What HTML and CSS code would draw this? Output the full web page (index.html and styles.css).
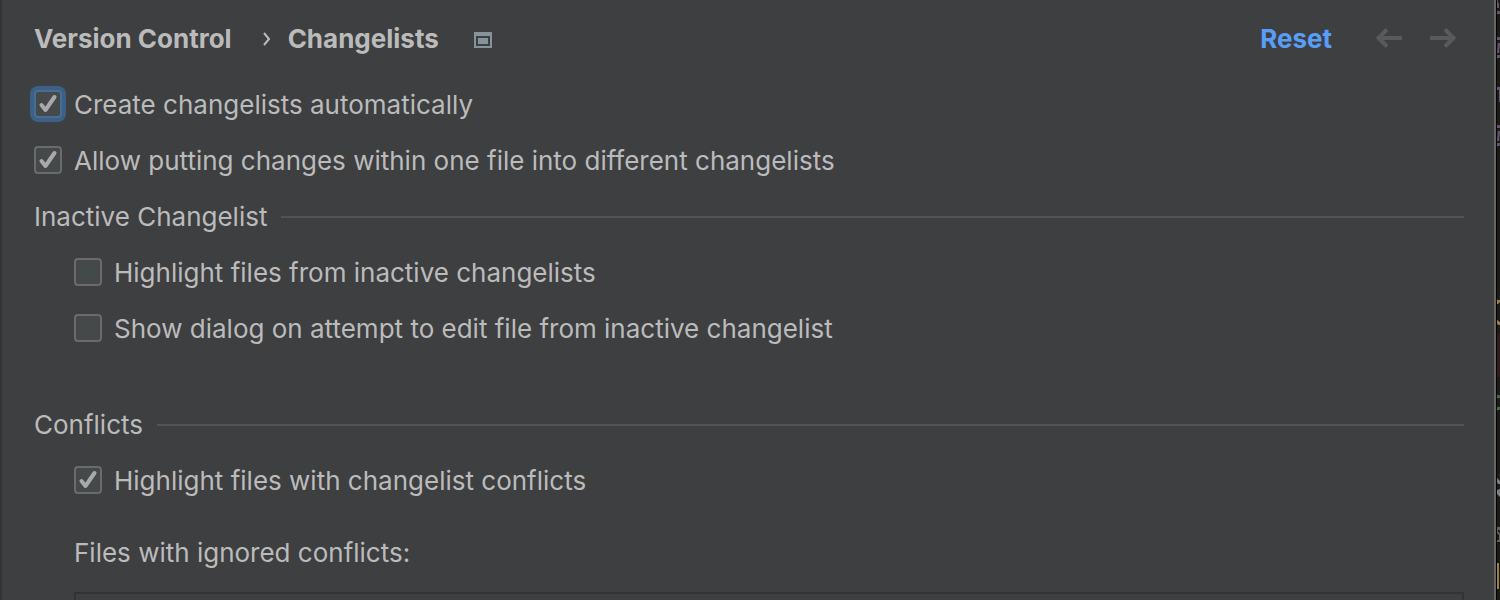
FILE: index.html
```html
<!DOCTYPE html>
<html lang="en">
<head>
    <meta charset="UTF-8">
    <meta name="viewport" content="width=device-width, initial-scale=1.0">
    <title>Changelists</title>
    <link rel="stylesheet" href="styles.css">
</head>
<body>
    <main class="settings">
        <header class="header">
            <nav class="breadcrumb">
                <a href="#version-control">Version Control</a>
                <svg class="chevron" width="8" height="16" viewBox="0 0 8 16"><path d="M1 2l5 6-5 6" fill="none" stroke="#bbbbbb" stroke-width="2"/></svg>
                <a href="#changelists">Changelists</a>
                <svg class="project-icon" width="18" height="16" viewBox="0 0 18 16">
                    <path d="M0 0h18v16H0zM2 4v10h14V4z" fill="#87939a" fill-rule="evenodd"/>
                    <path d="M4 6h10v6H4z" fill="#87939a"/>
                </svg>
            </nav>
            <button type="button" class="reset">Reset</button>
            <button type="button" class="nav-button" aria-label="Back" disabled>
                <svg width="26" height="20" viewBox="0 0 26 20"><path d="M26 10H3M11 1.500l-8.500 8.500 8.500 8.500" fill="none" stroke="currentColor" stroke-width="4"/></svg>
            </button>
            <button type="button" class="nav-button" aria-label="Forward" disabled>
                <svg width="26" height="20" viewBox="0 0 26 20"><path d="M0 10h23M15 1.500l8.500 8.500-8.500 8.500" fill="none" stroke="currentColor" stroke-width="4"/></svg>
            </button>
        </header>

        <div class="options">
            <label class="option">
                <span class="check">
                    <input type="checkbox" class="focused" checked>
                    <svg class="mark" width="28" height="28" viewBox="0 0 28 28"><path d="M7.500 15l4 5 9-13"/></svg>
                </span>
                Create changelists automatically
            </label>
            <label class="option">
                <span class="check">
                    <input type="checkbox" checked>
                    <svg class="mark" width="28" height="28" viewBox="0 0 28 28"><path d="M7.500 15l4 5 9-13"/></svg>
                </span>
                Allow putting changes within one file into different changelists
            </label>
        </div>

        <section class="group">
            <h2 class="group-title">Inactive Changelist</h2>
            <div class="options indented">
                <label class="option">
                    <span class="check">
                        <input type="checkbox">
                        <svg class="mark" width="28" height="28" viewBox="0 0 28 28"><path d="M7.500 15l4 5 9-13"/></svg>
                    </span>
                    Highlight files from inactive changelists
                </label>
                <label class="option">
                    <span class="check">
                        <input type="checkbox">
                        <svg class="mark" width="28" height="28" viewBox="0 0 28 28"><path d="M7.500 15l4 5 9-13"/></svg>
                    </span>
                    Show dialog on attempt to edit file from inactive changelist
                </label>
            </div>
        </section>

        <section class="group conflicts">
            <h2 class="group-title">Conflicts</h2>
            <div class="options indented">
                <label class="option">
                    <span class="check">
                        <input type="checkbox" checked>
                        <svg class="mark" width="28" height="28" viewBox="0 0 28 28"><path d="M7.500 15l4 5 9-13"/></svg>
                    </span>
                    Highlight files with changelist conflicts
                </label>
            </div>
            <div class="ignored indented">
                <label for="ignoredFiles">Files with ignored conflicts:</label>
                <textarea id="ignoredFiles" readonly></textarea>
            </div>
        </section>
    </main>

    <!-- editor visible behind the dialog -->
    <aside class="editor" aria-hidden="true">
        <svg width="3" height="600" viewBox="0 0 3 600">
            <path d="M0 0h1v3h1v5H0zM0 11h3v3H0zM0 37h3v3H0zM1 43h2l-1 10H0zM0 55h3v3H0zM0 87h3v15H2V90H0zM0 125h3v3H0zM1 131h2l-1 10H0zM0 143h3v3H0z" fill="#66546c"/>
            <path d="M0 300h3v2l-2 2H0zM0 320l3 2v3H1l-1-2z" fill="#9c8140"/>
            <path d="M0 333h3v44H0z" fill="#321b1a"/>
            <path d="M0 395h3v3H0zM0 407h3v3H0z" fill="#526448"/>
            <path d="M0 478l3 3v3H1l-1-2zM0 490l3-1v8l-3-3z" fill="#7c8187"/>
            <path d="M0 527h3v3H1v2l2 1v9H0v-2h2v-5l-2-2z" fill="#62605d"/>
            <path d="M0 563h2v26H0z" fill="#987d43"/>
        </svg>
    </aside>
</body>
</html>
```

FILE: styles.css
```css
* {
    box-sizing: border-box;
}
body {
    margin: 0;
    height: 100vh;
    display: flex;
    overflow: hidden;
    background-color: #1d1b17;
    color: #bbbbbb;
    font-family: Inter, sans-serif;
    font-size: 26px;
    line-height: 28px;
}
.settings {
    flex: 1;
    display: flex;
    flex-direction: column;
    padding: 25px 30px 0 32px;
    background-color: #3e3f41;
    border-left: 2px solid #323335;
    border-right: 2px solid #666666;
}
.header {
    display: flex;
    align-items: center;
    margin-bottom: 38px;
}
.breadcrumb {
    flex: 1;
    display: flex;
    align-items: center;
    font-weight: bold;
}
.breadcrumb a {
    color: inherit;
    text-decoration: none;
}
.chevron {
    margin: 0 17px 0 31px;
}
.project-icon {
    margin-left: 35px;
    margin-top: 2px;
}
button {
    padding: 0;
    border: none;
    background: none;
    font: inherit;
}
.reset {
    margin-right: 16px;
    color: #589df6;
    font-weight: bold;
}
.nav-button {
    display: flex;
    margin: 0 0 2px 28px;
    color: #5a5a5a;
}
.nav-button:last-child {
    margin-right: 8px;
}
.options {
    display: flex;
    flex-direction: column;
    align-items: flex-start;
    gap: 28px;
}
.option {
    display: flex;
    align-items: flex-start;
    gap: 12px;
    white-space: nowrap;
}
.check {
    display: grid;
    margin-top: -1px;
}
.check input {
    grid-area: 1 / 1;
    appearance: none;
    width: 28px;
    height: 28px;
    margin: 0;
    border: 2px solid #6b6b6b;
    border-radius: 4px;
    background-color: #434a49;
}
.check .focused {
    border-color: #466d94;
    box-shadow: 0 0 0 4px #3d6185;
}
.mark {
    grid-area: 1 / 1;
    visibility: hidden;
    fill: none;
    stroke: #a9a9a9;
    stroke-width: 4;
    stroke-linecap: round;
    stroke-linejoin: round;
    pointer-events: none;
}
.check input:checked + .mark {
    visibility: visible;
}
.group {
    margin-top: 28px;
}
.conflicts {
    flex: 1;
    display: flex;
    flex-direction: column;
    min-height: 0;
    margin-top: 68px;
}
.group-title {
    display: flex;
    align-items: center;
    gap: 14px;
    margin: 0 0 28px;
    font-size: 26px;
    font-weight: normal;
}
.group-title::after {
    content: "";
    flex: 1;
    height: 2px;
    background-color: #515355;
}
.indented {
    margin-left: 40px;
}
.ignored {
    flex: 1;
    display: flex;
    flex-direction: column;
    gap: 25px;
    min-height: 0;
    margin-top: 44px;
}
/* the list runs on to the lower edge of the window */
.ignored textarea {
    flex: 1;
    min-height: 0;
    padding: 0;
    border: 2px solid #323335;
    border-bottom: none;
    background-color: #3e3f41;
    color: inherit;
    font: inherit;
    resize: none;
}
.editor {
    border-left: 1px solid #000000;
}
.editor svg {
    display: block;
}
```
